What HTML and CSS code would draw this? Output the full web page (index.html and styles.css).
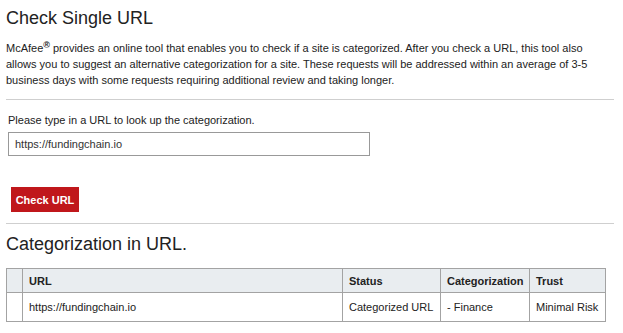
FILE: index.html
```html
<!DOCTYPE html>
<html>
<head>
<meta charset="utf-8">
<link rel="stylesheet" href="styles.css">
</head>
<body>
<div class="page">
  <h1 class="title">Check Single URL</h1>
  <p class="intro">McAfee<sup class="reg">®</sup> provides an online tool that enables you to check if a site is categorized. After you check a URL, this tool also allows you to suggest an alternative categorization for a site. These requests will be addressed within an average of 3-5 business days with some requests requiring additional review and taking longer.</p>
  <hr class="rule">
  <div class="form">
    <label class="label">Please type in a URL to look up the categorization.</label>
    <div class="input">https://fundingchain.io</div>
    <button class="btn">Check URL</button>
  </div>
  <hr class="rule">
  <h2 class="title title2">Categorization in URL.</h2>
  <table class="results">
    <colgroup>
      <col class="c0"><col class="c1"><col class="c2"><col class="c3"><col class="c4">
    </colgroup>
    <thead>
      <tr><th></th><th>URL</th><th>Status</th><th>Categorization</th><th>Trust</th></tr>
    </thead>
    <tbody>
      <tr><td></td><td>https://fundingchain.io</td><td>Categorized URL</td><td>- Finance</td><td>Minimal Risk</td></tr>
    </tbody>
  </table>
</div>
</body>
</html>
```
FILE: styles.css
```css
html, body {
  margin: 0;
  padding: 0;
  background: #fff;
}
body {
  font-family: "Liberation Sans", Arial, sans-serif;
  color: #222;
}
.page {
  padding: 7px 9px 0 6px;
}
.title {
  margin: 0;
  font-size: 18px;
  line-height: 22px;
  font-weight: normal;
  color: #222;
}
.intro {
  margin: 11px 0 11px;
  font-size: 11px;
  line-height: 16px;
  color: #222;
}
.reg {
  font-size: 9px;
  line-height: 0;
  vertical-align: 4px;
  font-weight: bold;
}
.rule {
  margin: 0;
  border: 0;
  border-top: 1px solid #cfcfcf;
  height: 0;
}
.form {
  padding: 12px 0 0 2px;
  display: flex;
  flex-direction: column;
  align-items: flex-start;
}
.label {
  font-size: 11px;
  line-height: 16px;
  color: #222;
}
.input {
  margin-top: 4px;
  box-sizing: border-box;
  width: 362px;
  height: 24px;
  border: 1px solid #999;
  padding: 0 6px;
  font-size: 11px;
  line-height: 22px;
  color: #333;
}
.btn {
  margin: 31px 0 11px 3px;
  box-sizing: border-box;
  width: 68px;
  height: 25px;
  border: 0;
  padding: 0;
  background: #c0171b;
  color: #fff;
  font-family: "Liberation Sans", Arial, sans-serif;
  font-size: 11px;
  font-weight: bold;
}
.title2 {
  margin-top: 9px;
}
.results {
  margin-top: 13px;
  border-collapse: collapse;
  table-layout: fixed;
  width: 599px;
  font-size: 11px;
  color: #222;
}
.c0 { width: 16px; }
.c1 { width: 320px; }
.c2 { width: 98px; }
.c3 { width: 89px; }
.c4 { width: 76px; }
.results th, .results td {
  border: 1px solid #a3a3a3;
  text-align: left;
  padding: 0 6px;
  white-space: nowrap;
}
.results th {
  background: #e9edf0;
  height: 23px;
  font-weight: bold;
}
.results td {
  height: 28px;
}
```
